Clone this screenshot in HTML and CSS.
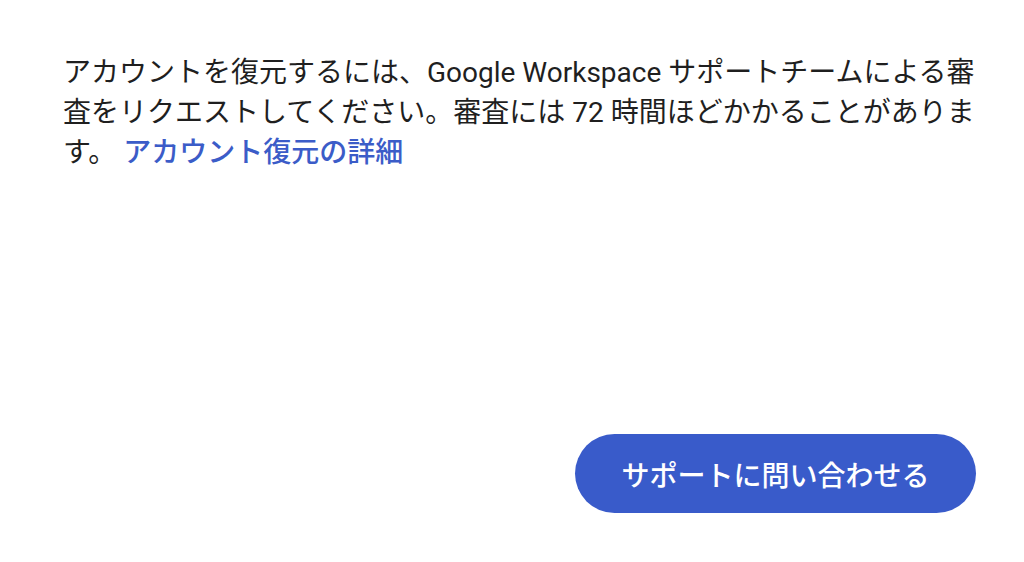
FILE: index.html
```html
<!DOCTYPE html>
<html lang="ja">

<head>
    <meta charset="UTF-8">
    <meta name="viewport" content="width=device-width, initial-scale=1.0">
    <title>アカウントの復元</title>
    <link rel="stylesheet" href="styles.css">
</head>

<body>
    <div class="page">
        <!-- 説明文 -->
        <p class="desc">アカウントを復元するには、Google Workspace サポートチームによる審査をリクエストしてください。審査には 72 時間ほどかかることがあります。 <a class="link" href="javascript:;">アカウント復元の詳細</a></p>
        <!-- ボタン -->
        <div class="actions">
            <a class="btn" href="javascript:;">サポートに問い合わせる</a>
        </div>
    </div>
</body>

</html>
```

FILE: styles.css
```css
* {
    margin: 0;
    padding: 0;
    box-sizing: border-box;
}

html,
body {
    height: 100%;
    background-color: #fff;
}

body {
    font-family: Roboto, "Noto Sans CJK JP", sans-serif;
    color: #1f1f1f;
}

.page {
    min-height: 100%;
    display: flex;
    flex-direction: column;
    padding: 53px 48px 49px 63px;
}

.desc {
    font-size: 28px;
    line-height: 40px;
}

/* リンク */
.link {
    color: #3b5cc8;
    font-weight: 500;
    text-decoration: none;
}

.actions {
    margin-top: auto;
    display: flex;
    justify-content: flex-end;
}

.btn {
    display: flex;
    align-items: center;
    justify-content: center;
    width: 401px;
    height: 79px;
    border-radius: 40px;
    background-color: #395bca;
    color: #fff;
    font-size: 28px;
    font-weight: 500;
    text-decoration: none;
}
```
